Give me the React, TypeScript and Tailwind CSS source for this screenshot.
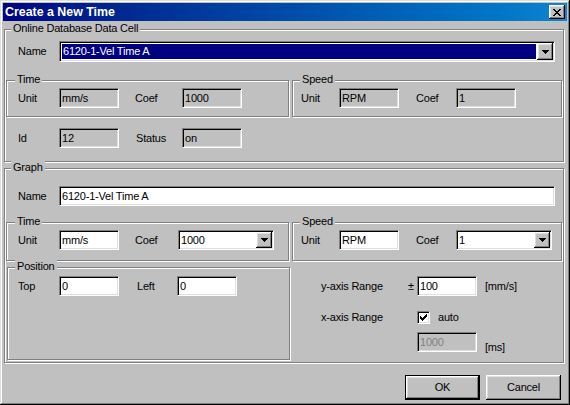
import React from "react";

// classic 3D bevels
const sunken =
  "border border-t-[#808080] border-l-[#808080] border-b-white border-r-white shadow-[inset_1px_1px_0_#000,inset_-1px_-1px_0_#dfdfdf]";
const raised =
  "shadow-[inset_-1px_-1px_0_#000,inset_1px_1px_0_#fff,inset_-2px_-2px_0_#808080,inset_2px_2px_0_#dfdfdf]";

function Group({
  title,
  titleLeft,
  className = "",
  children,
}: {
  title: string;
  titleLeft: string;
  className?: string;
  children?: React.ReactNode;
}) {
  return (
    <div
      className={`relative border border-[#808080] shadow-[1px_1px_0_#fff,inset_1px_1px_0_#fff] ${className}`}
    >
      <span className={`absolute top-[-8px] bg-[#c0c0c0] px-[2px] leading-[13px] whitespace-nowrap ${titleLeft}`}>
        {title}
      </span>
      {children}
    </div>
  );
}

function TextBox({
  value,
  className = "",
  readOnly = false,
  disabled = false,
}: {
  value: string;
  className?: string;
  readOnly?: boolean;
  disabled?: boolean;
}) {
  const bg = readOnly || disabled ? "bg-[#c0c0c0]" : "bg-white";
  return (
    <div
      className={`${sunken} ${bg} h-[20px] flex items-center pl-[2px] overflow-hidden whitespace-nowrap ${
        disabled ? "text-[#808080]" : ""
      } ${className}`}
    >
      {value}
    </div>
  );
}

function Arrow() {
  return (
    <svg width="7" height="4" viewBox="0 0 7 4" shapeRendering="crispEdges">
      <rect x="0" y="0" width="7" height="1" fill="#000" />
      <rect x="1" y="1" width="5" height="1" fill="#000" />
      <rect x="2" y="2" width="3" height="1" fill="#000" />
      <rect x="3" y="3" width="1" height="1" fill="#000" />
    </svg>
  );
}

function Combo({ value, className = "", selected = false }: { value: string; className?: string; selected?: boolean }) {
  return (
    <div className={`${sunken} bg-white flex p-[1px] ${className}`}>
      <div
        className={`flex-1 flex items-center overflow-hidden whitespace-nowrap ${
          selected ? "m-[1px] bg-[#000080] text-white pl-[1px]" : "pl-[1px]"
        }`}
      >
        {value}
      </div>
      <div className={`w-[16px] bg-[#c0c0c0] flex items-center justify-center ${raised}`}>
        <Arrow />
      </div>
    </div>
  );
}

function CheckBox() {
  return (
    <div className={`${sunken} bg-white w-[13px] h-[13px] flex items-center justify-center`}>
      <svg width="7" height="7" viewBox="0 0 7 7" shapeRendering="crispEdges">
        <rect x="6" y="0" width="1" height="1" fill="#000" />
        <rect x="5" y="1" width="2" height="1" fill="#000" />
        <rect x="0" y="2" width="1" height="1" fill="#000" />
        <rect x="4" y="2" width="3" height="1" fill="#000" />
        <rect x="0" y="3" width="2" height="1" fill="#000" />
        <rect x="3" y="3" width="3" height="1" fill="#000" />
        <rect x="0" y="4" width="5" height="1" fill="#000" />
        <rect x="1" y="5" width="3" height="1" fill="#000" />
        <rect x="2" y="6" width="1" height="1" fill="#000" />
      </svg>
    </div>
  );
}

function CloseGlyph() {
  return (
    <svg width="8" height="7" viewBox="0 0 8 7" shapeRendering="crispEdges">
      <rect x="0" y="0" width="2" height="1" fill="#000" />
      <rect x="6" y="0" width="2" height="1" fill="#000" />
      <rect x="1" y="1" width="2" height="1" fill="#000" />
      <rect x="5" y="1" width="2" height="1" fill="#000" />
      <rect x="2" y="2" width="4" height="1" fill="#000" />
      <rect x="3" y="3" width="2" height="1" fill="#000" />
      <rect x="2" y="4" width="4" height="1" fill="#000" />
      <rect x="1" y="5" width="2" height="1" fill="#000" />
      <rect x="5" y="5" width="2" height="1" fill="#000" />
      <rect x="0" y="6" width="2" height="1" fill="#000" />
      <rect x="6" y="6" width="2" height="1" fill="#000" />
    </svg>
  );
}

export default function App() {
  return (
    <div className="w-[570px] h-[405px] overflow-hidden bg-[#c0c0c0] p-[3px] font-['Liberation_Sans',Arial,sans-serif] text-[11px] leading-[13px] tracking-[-0.2px] text-black shadow-[inset_-1px_-1px_0_#000,inset_1px_1px_0_#dfdfdf,inset_-2px_-2px_0_#808080,inset_2px_2px_0_#fff]">
      {/* タイトルバー */}
      <div className="h-[18px] flex items-center bg-linear-to-r from-[#000080] to-[#1084d0] px-[2px]">
        <span className="flex-1 text-white font-bold text-[12.4px] leading-[14px] tracking-normal">Create a New Time</span>
        <div className={`w-[16px] h-[14px] bg-[#c0c0c0] flex items-center justify-center ${raised}`}>
          <CloseGlyph />
        </div>
      </div>

      {/* Online Database Data Cell */}
      <Group title="Online Database Data Cell" titleLeft="left-[6px]" className="mt-[8px] ml-[1px] w-[560px] h-[133px]">
        <div className="flex items-center mt-[11px] pl-[13px]">
          <span className="w-[41px]">Name</span>
          <Combo className="w-[496px] h-[21px]" value="6120-1-Vel Time A" selected />
        </div>
        <div className="flex mt-[18px] ml-[1px]">
          <Group title="Time" titleLeft="left-[8px]" className="w-[283px] h-[37px]">
            <div className="flex items-center mt-[7px] pl-[11px]">
              <span className="w-[41px]">Unit</span>
              <TextBox className="w-[60px]" value="mm/s" readOnly />
              <span className="ml-[16px] w-[47px]">Coef</span>
              <TextBox className="w-[60px]" value="1000" readOnly />
            </div>
          </Group>
          <Group title="Speed" titleLeft="left-[7px]" className="ml-[3px] w-[270px] h-[37px]">
            <div className="flex items-center mt-[7px] pl-[8px]">
              <span className="w-[38px]">Unit</span>
              <TextBox className="w-[60px]" value="RPM" readOnly />
              <span className="ml-[17px] w-[40px]">Coef</span>
              <TextBox className="w-[60px]" value="1" readOnly />
            </div>
          </Group>
        </div>
        <div className="flex items-center mt-[11px] pl-[13px]">
          <span className="w-[41px]">Id</span>
          <TextBox className="w-[60px]" value="12" readOnly />
          <span className="ml-[17px] w-[46px]">Status</span>
          <TextBox className="w-[60px]" value="on" readOnly />
        </div>
      </Group>

      {/* Graph */}
      <Group title="Graph" titleLeft="left-[6px]" className="mt-[6px] ml-[1px] w-[560px] h-[195px]">
        <div className="flex items-center mt-[17px] pl-[13px]">
          <span className="w-[41px]">Name</span>
          <TextBox className="w-[496px]" value="6120-1-Vel Time A" />
        </div>
        <div className="flex mt-[16px] ml-[1px]">
          <Group title="Time" titleLeft="left-[8px]" className="w-[283px] h-[39px]">
            <div className="flex items-center mt-[7px] pl-[11px]">
              <span className="w-[41px]">Unit</span>
              <TextBox className="w-[60px]" value="mm/s" />
              <span className="ml-[16px] w-[43px]">Coef</span>
              <Combo className="w-[96px] h-[20px]" value="1000" />
            </div>
          </Group>
          <Group title="Speed" titleLeft="left-[7px]" className="ml-[3px] w-[270px] h-[39px]">
            <div className="flex items-center mt-[7px] pl-[8px]">
              <span className="w-[38px]">Unit</span>
              <TextBox className="w-[60px]" value="RPM" />
              <span className="ml-[17px] w-[40px]">Coef</span>
              <Combo className="w-[96px] h-[20px]" value="1" />
            </div>
          </Group>
        </div>
        <div className="flex items-start mt-[6px]">
          <Group title="Position" titleLeft="left-[7px]" className="ml-[2px] w-[283px] h-[93px]">
            <div className="flex items-center mt-[8px] pl-[10px]">
              <span className="w-[41px]">Top</span>
              <TextBox className="w-[60px]" value="0" />
              <span className="ml-[18px] w-[40px]">Left</span>
              <TextBox className="w-[60px]" value="0" />
            </div>
          </Group>
          <div className="flex-1 pl-[31px]">
            <div className="flex items-center mt-[9px]">
              <span className="w-[87px]">y-axis Range</span>
              <span className="w-[9px]">±</span>
              <TextBox className="w-[60px]" value="100" />
              <span className="ml-[8px]">[mm/s]</span>
            </div>
            <div className="flex items-center mt-[15px] h-[13px]">
              <span className="w-[96px]">x-axis Range</span>
              <CheckBox />
              <span className="ml-[8px]">auto</span>
            </div>
            <div className="flex items-start mt-[8px] pl-[96px]">
              <TextBox className="w-[60px]" value="1000" disabled />
              <span className="ml-[8px] mt-[9px]">[ms]</span>
            </div>
          </div>
        </div>
      </Group>

      {/* ボタン */}
      <div className="flex justify-end gap-[6px] pr-[6px] mt-[12px]">
        <div className="w-[75px] h-[25px] border border-black flex">
          <div className={`flex-1 flex items-center justify-center bg-[#c0c0c0] ${raised}`}>OK</div>
        </div>
        <div className={`w-[75px] h-[25px] flex items-center justify-center bg-[#c0c0c0] ${raised}`}>Cancel</div>
      </div>
    </div>
  );
}
